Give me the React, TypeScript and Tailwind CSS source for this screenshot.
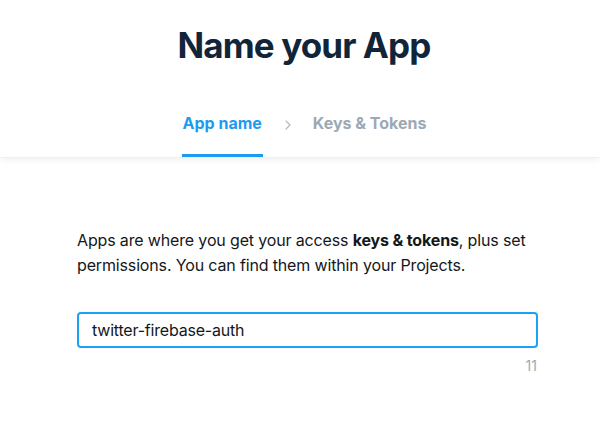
import { ChevronRight } from "lucide-react";

export default function App() {
  return (
    <div
      className="min-h-[426px] w-full bg-white"
      style={{ fontFamily: "Inter, 'Noto Sans', sans-serif" }}
    >
      {/* Header */}
      <div className="relative z-10 bg-white pl-[8px] shadow-[0_2px_6px_rgba(0,0,0,0.06)] border-b border-[#eef0f2]">
        <h1 className="pt-[21px] text-center text-[35px] leading-[48px] font-bold tracking-[-0.9px] text-[#10243a]">
          Name your App
        </h1>
        <div className="mt-[44px] flex items-end justify-center">
          <div className="flex flex-col items-center">
            <span className="px-[1px] text-[16px] leading-[20px] font-bold text-[#1d9bf0]">
              App name
            </span>
            <div className="mt-[21px] h-[3px] w-full bg-[#1d9bf0]" />
          </div>
          <div className="mx-[17px] mb-[24px] flex items-center text-[#aab8c2]">
            <ChevronRight className="h-[16px] w-[16px]" strokeWidth={1.6} />
          </div>
          <div className="flex flex-col items-center">
            <span className="text-[16px] leading-[20px] font-bold text-[#9ba9b4]">
              Keys &amp; Tokens
            </span>
            <div className="mt-[21px] h-[3px] w-full bg-transparent" />
          </div>
        </div>
      </div>

      {/* Body */}
      <div className="ml-[77px] w-[461px] pt-[70px]">
        <p className="text-[16px] leading-[25px] tracking-[-0.15px] text-[#14171a]">
          Apps are where you get your access <b className="font-bold">keys &amp; tokens</b>, plus set
          permissions. You can find them within your Projects.
        </p>
        <div className="mt-[34px] flex h-[36px] items-center rounded-[4px] border-2 border-[#1da1f2] px-[13px]">
          <span className="text-[16px] tracking-[-0.2px] text-[#14171a]">twitter-firebase-auth</span>
        </div>
        <div className="mt-[9px] pr-[1px] text-right text-[14px] leading-[18px] text-[#a0aab2]">11</div>
      </div>
    </div>
  );
}
